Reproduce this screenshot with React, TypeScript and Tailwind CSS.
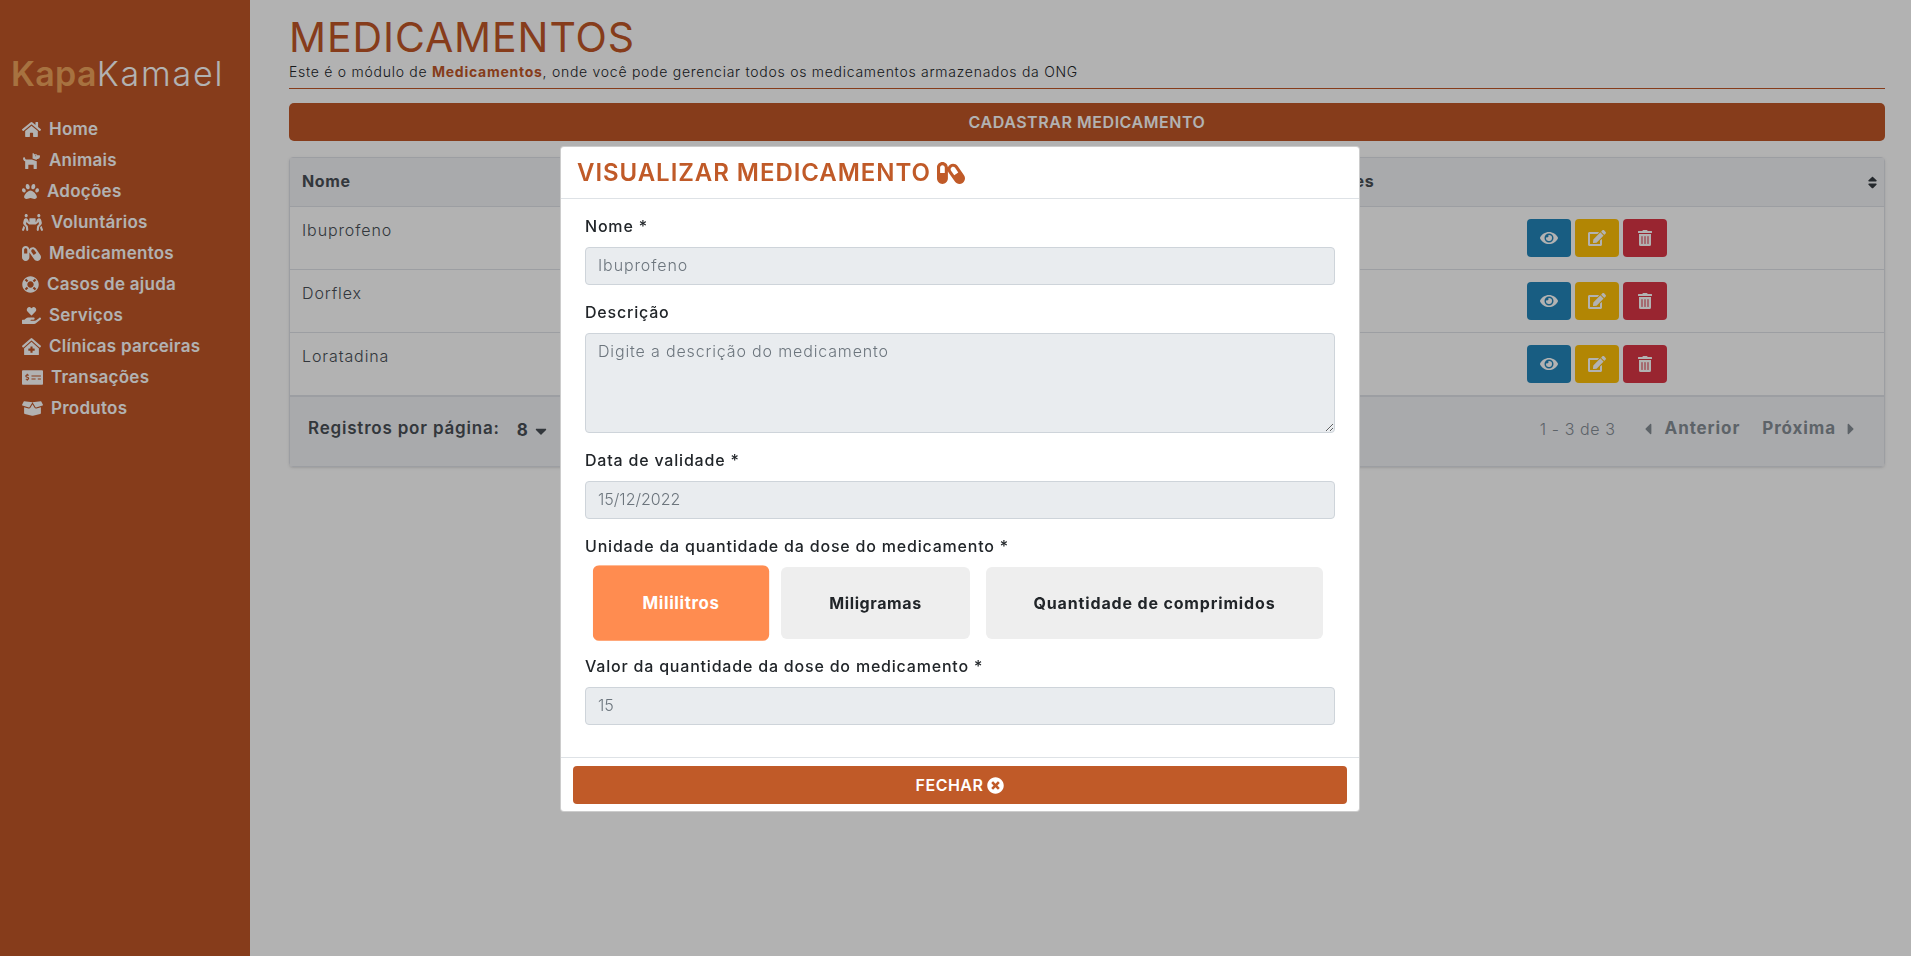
import {
  FaBoxOpen,
  FaCapsules,
  FaCaretDown,
  FaCaretLeft,
  FaCaretRight,
  FaClinicMedical,
  FaDog,
  FaEdit,
  FaEye,
  FaHandHoldingHeart,
  FaHome,
  FaLifeRing,
  FaMoneyCheckAlt,
  FaPaw,
  FaPeopleCarry,
  FaSort,
  FaTimesCircle,
  FaTrashAlt,
} from "react-icons/fa";

const menu = [
  { label: "Home", icon: FaHome, w: "w-[19px]" },
  { label: "Animais", icon: FaDog, w: "w-[19px]" },
  { label: "Adoções", icon: FaPaw, w: "w-[17px]" },
  { label: "Voluntários", icon: FaPeopleCarry, w: "w-[21px]" },
  { label: "Medicamentos", icon: FaCapsules, w: "w-[19px]" },
  { label: "Casos de ajuda", icon: FaLifeRing, w: "w-[17px]" },
  { label: "Serviços", icon: FaHandHoldingHeart, w: "w-[19px]" },
  { label: "Clínicas parceiras", icon: FaClinicMedical, w: "w-[19px]" },
  { label: "Transações", icon: FaMoneyCheckAlt, w: "w-[21px]" },
  { label: "Produtos", icon: FaBoxOpen, w: "w-[21px]" },
];

const medicamentos = ["Ibuprofeno", "Dorflex", "Loratadina"];

function Sidebar() {
  return (
    <aside className="w-[250px] h-screen shrink-0 bg-[#c05627] text-white">
      <div className="pt-[53px] pl-[11px] h-[114px] text-[34px] leading-[42px]">
        <span className="font-semibold text-[#f0a45c] tracking-[0.3px]">Kapa</span>
        <span className="font-light tracking-[1.8px]">Kamael</span>
      </div>
      <nav className="pl-[22px] flex flex-col">
        {menu.map((m) => (
          <a key={m.label} className="h-[31px] flex items-center gap-2 text-[17px] font-semibold tracking-[0.25px]">
            <m.icon className={`h-[19px] ${m.w}`} />
            {m.label}
          </a>
        ))}
      </nav>
    </aside>
  );
}

function Table() {
  return (
    <div className="mt-4 border border-[#e0e2e8] rounded-sm shadow-sm">
      <table className="w-full table-fixed text-[16px] text-[#495057]">
        <thead className="bg-[#f3f4f6]">
          <tr className="h-[48px] border-b border-[#e0e2e8]">
            <th className="w-[1020px] text-left px-3 pb-0.5 font-bold tracking-[0.6px]">Nome</th>
            <th className="text-left px-3 pb-0.5 font-bold relative tracking-[0.6px]">
              Ações
              <FaSort size={15} className="absolute right-1 top-[17px] text-[#343a40]" />
            </th>
          </tr>
        </thead>
        <tbody>
          {medicamentos.map((nome) => (
            <tr key={nome} className="h-[63px] border-b border-[#e0e2e8] bg-white">
              <td className="px-3 pt-[11px] align-top font-light tracking-[0.9px]">{nome}</td>
              <td className="pl-[217px] align-middle">
                <div className="flex gap-1 text-white">
                  <button className="w-11 h-[38px] rounded flex items-center justify-center bg-[#2386ba]">
                    <FaEye size={18} />
                  </button>
                  <button className="w-11 h-[38px] rounded flex items-center justify-center bg-[#ffc107]">
                    <FaEdit size={18} />
                  </button>
                  <button className="w-11 h-[38px] rounded flex items-center justify-center bg-[#dc3545]">
                    <FaTrashAlt size={16} />
                  </button>
                </div>
              </td>
            </tr>
          ))}
        </tbody>
      </table>
      <div className="h-[70px] pb-1 border-t border-[#e0e2e8] bg-[#f3f4f6] flex items-center pl-[18px] pr-[24px] text-[#495057]">
        <span className="text-[17px] font-semibold tracking-[0.8px]">Registros por página:</span>
        <span className="ml-[17px] text-[17px] font-bold mt-1">8</span>
        <FaCaretDown size={18} className="ml-1 mt-1" />
        <span className="ml-auto text-[16px] font-light text-[#868e96] tracking-[0.6px]">1 - 3 de 3</span>
        <FaCaretLeft size={18} className="ml-[23px] text-[#868e96]" />
        <span className="ml-2 text-[17px] font-bold text-[#868e96] tracking-[0.9px]">Anterior</span>
        <span className="ml-[22px] text-[17px] font-bold text-[#868e96] tracking-[0.9px]">Próxima</span>
        <FaCaretRight size={18} className="ml-1.5 text-[#868e96]" />
      </div>
    </div>
  );
}

function Label({ children }: { children: string }) {
  return <label className="block h-6 text-[16px] leading-6 font-medium text-[#212529] tracking-[0.8px]">{children}</label>;
}

function Field({ label, value, digits }: { label: string; value: string; digits?: boolean }) {
  return (
    <div className="mb-[15px]">
      <Label>{label}</Label>
      <input
        disabled
        value={value}
        className={`block mt-[9px] w-full h-[38px] px-3 pb-0.5 rounded bg-[#e9ecef] border border-[#ced4da] text-[16px] font-light text-[#6c757d] ${digits ? "tracking-[0px]" : "tracking-[0.9px]"}`}
      />
    </div>
  );
}

function Modal() {
  return (
    <div className="fixed inset-0 bg-black/30">
      <div className="absolute left-[560px] top-[146px] w-[800px] h-[666px] bg-white rounded border border-black/20 flex flex-col">
        <div className="h-[52px] shrink-0 border-b border-[#dee2e6] px-4 flex items-center gap-1.5">
          <h2 className="text-[24px] font-semibold text-[#c05a28] tracking-[0.95px]">VISUALIZAR MEDICAMENTO</h2>
          <FaCapsules className="h-7 w-7 text-[#c05a28]" />
        </div>
        <div className="flex-1 px-6 pt-[15px]">
          <Field label="Nome *" value="Ibuprofeno" />
          <div className="mb-[15px]">
            <Label>Descrição</Label>
            <textarea
              disabled
              placeholder="Digite a descrição do medicamento"
              className="block mt-[9px] w-full h-[100px] px-3 py-[5px] rounded bg-[#e9ecef] border border-[#ced4da] text-[16px] font-light text-[#6c757d] placeholder:text-[#6c757d] tracking-[0.85px]"
            />
          </div>
          <Field label="Data de validade *" value="15/12/2022" digits />
          <Label>Unidade da quantidade da dose do medicamento *</Label>
          <div className="flex gap-4 px-3 mt-[9px] mb-[15px] text-[16px] font-bold text-[#212529] tracking-[0.85px]">
            <button className="w-[168px] h-[72px] rounded-md bg-[#ff8c50] text-white scale-105 tracking-[0.6px]">Mililitros</button>
            <button className="w-[189px] h-[72px] rounded-md bg-[#eeeeee] tracking-[0.6px]">Miligramas</button>
            <button className="w-[337px] h-[72px] rounded-md bg-[#eeeeee]">Quantidade de comprimidos</button>
          </div>
          <Field label="Valor da quantidade da dose do medicamento *" value="15" digits />
        </div>
        <div className="h-[54px] shrink-0 border-t border-[#dee2e6] px-3 pt-2">
          <button className="w-full h-[38px] rounded bg-[#c05a28] text-white text-[16px] font-semibold tracking-[0.5px] flex items-center justify-center gap-1">
            FECHAR
            <FaTimesCircle size={17} />
          </button>
        </div>
      </div>
    </div>
  );
}

export default function App() {
  return (
    <div className="flex h-screen overflow-hidden bg-white font-[Inter,sans-serif]">
      <Sidebar />
      <main className="flex-1 pl-[39px] pr-[26px]">
        <h1 className="pt-[14px] h-[60px] text-[41px] leading-[47px] font-normal text-[#c05627] tracking-[0.9px]">MEDICAMENTOS</h1>
        <p className="h-[29px] pt-0.5 text-[14px] leading-5 font-light text-[#212529] border-b border-[#c05627] tracking-[0.73px]">
          Este é o módulo de <strong className="font-bold text-[#c05627]">Medicamentos</strong>, onde você pode gerenciar todos os medicamentos armazenados da ONG
        </p>
        <button className="mt-[14px] w-full h-[38px] rounded-[5px] bg-[#c05627] text-white text-[16px] font-semibold tracking-[0.55px]">
          CADASTRAR MEDICAMENTO
        </button>
        <Table />
      </main>
      <Modal />
    </div>
  );
}
